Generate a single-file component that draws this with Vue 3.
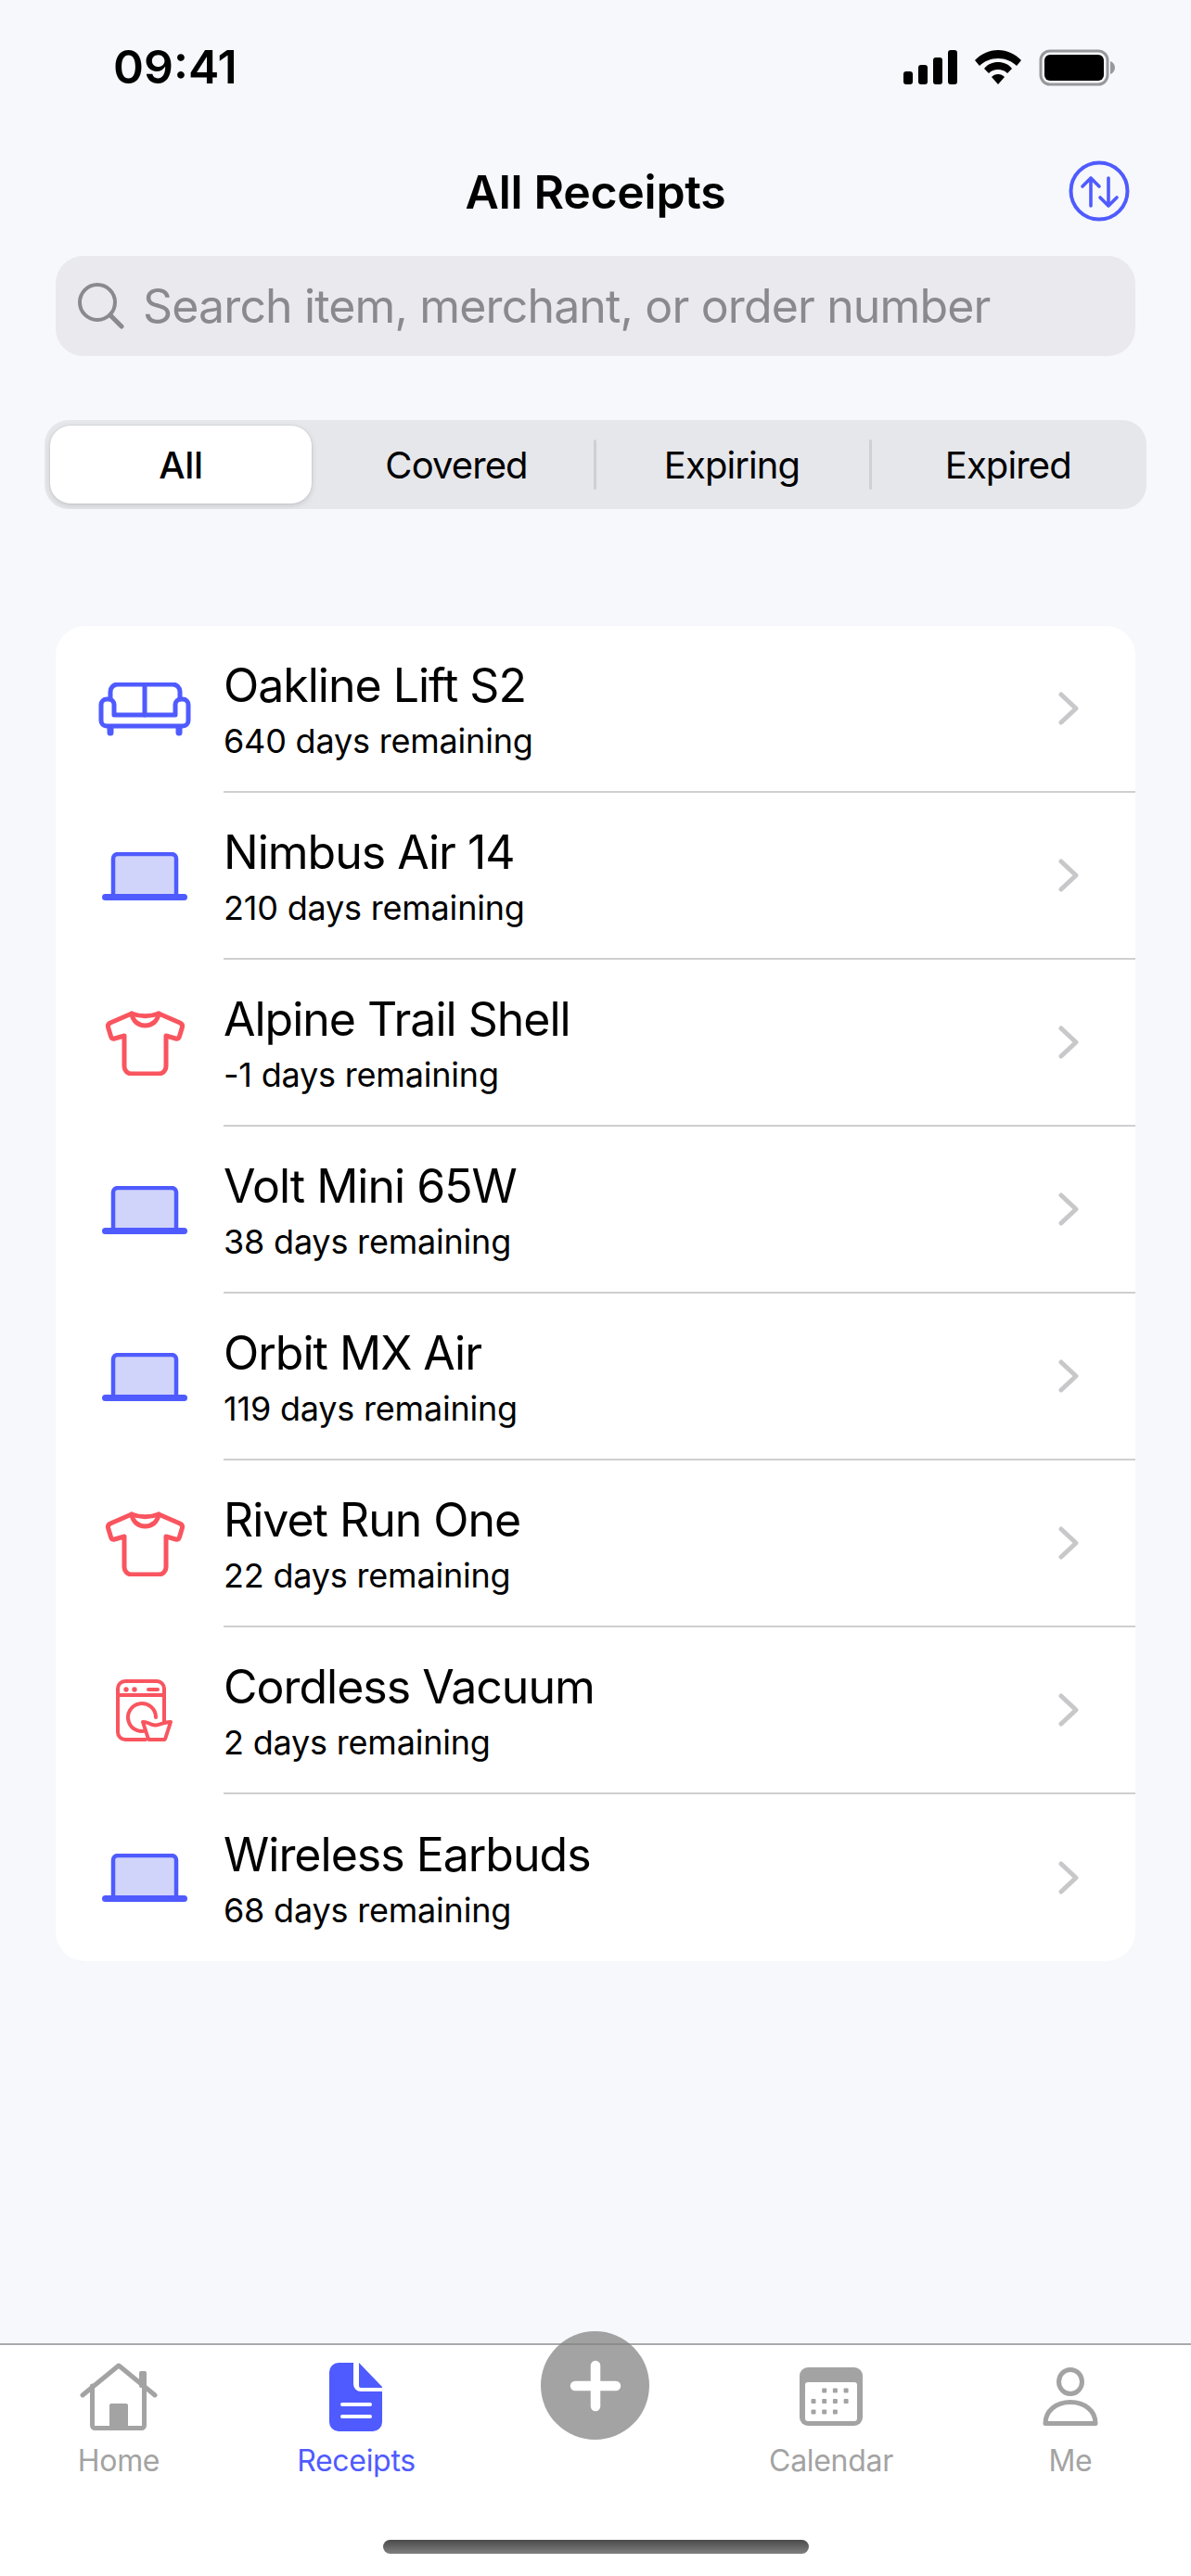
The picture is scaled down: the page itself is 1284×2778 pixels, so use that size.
<script setup>
const items = [
  { name: 'Oakline Lift S2', days: '640 days remaining', icon: 'sofa' },
  { name: 'Nimbus Air 14', days: '210 days remaining', icon: 'laptop' },
  { name: 'Alpine Trail Shell', days: '-1 days remaining', icon: 'shirt' },
  { name: 'Volt Mini 65W', days: '38 days remaining', icon: 'laptop' },
  { name: 'Orbit MX Air', days: '119 days remaining', icon: 'laptop' },
  { name: 'Rivet Run One', days: '22 days remaining', icon: 'shirt' },
  { name: 'Cordless Vacuum', days: '2 days remaining', icon: 'washer' },
  { name: 'Wireless Earbuds', days: '68 days remaining', icon: 'laptop' },
]
const tabs = ['All', 'Covered', 'Expiring', 'Expired']
const dots = [[1,0],[2,0],[3,0],[0,1],[1,1],[2,1],[3,1],[0,2],[1,2],[2,2]]
</script>

<template>
  <div class="screen">
    <div class="status">
      <span class="time">09:41</span>
      <div class="status-icons">
        <svg width="58" height="40" viewBox="0 0 58 40"><rect x="0" y="24" width="10" height="14" rx="3"/><rect x="16" y="17" width="10" height="21" rx="3"/><rect x="32" y="9" width="10" height="29" rx="3"/><rect x="48" y="1" width="10" height="37" rx="3"/></svg>
        <svg width="50" height="40" viewBox="0 0 50 40"><path d="M25 1C15 1 7 5 0 12l5 6c5-5 12-8 20-8s15 3 20 8l5-6C43 5 35 1 25 1z"/><path d="M25 14c-6 0-11 2-15 7l5 5c3-3 6-4 10-4s7 1 10 4l5-5c-4-5-9-7-15-7z"/><path d="M25 27c-3 0-5 1-7 3l7 8 7-8c-2-2-4-3-7-3z"/></svg>
        <svg width="82" height="40" viewBox="0 0 82 40"><rect x="2" y="2" width="72" height="36" rx="10" fill="none" stroke="#98989c" stroke-width="3"/><rect x="6" y="6" width="64" height="28" rx="6"/><path d="M77 13c3 1 5 4 5 7s-2 6-5 7z" fill="#98989c"/></svg>
      </div>
    </div>

    <header class="nav">
      <h1>All Receipts</h1>
      <svg class="sort" width="66" height="66" viewBox="0 0 66 66" fill="none" stroke="#4f5bff" stroke-linecap="round" stroke-linejoin="round"><circle cx="33" cy="33" r="30.500" stroke-width="4"/><path d="M24 49V19M15 28l9-9 9 9M43 19v30M34 40l9 9 9-9" stroke-width="3.600"/></svg>
    </header>

    <div class="search">
      <svg width="50" height="50" viewBox="0 0 50 50" fill="none" stroke="#8a8a8e" stroke-width="4" stroke-linecap="round"><circle cx="21" cy="21" r="19"/><path d="M35 35l12 12" stroke-width="5"/></svg>
      <span>Search item, merchant, or order number</span>
    </div>

    <div class="segments">
      <div v-for="(t, i) in tabs" :key="t" class="segment" :class="{ active: i === 0, sep: i > 1 }">{{ t }}</div>
    </div>

    <ul class="list">
      <li v-for="item in items" :key="item.name" class="row">
        <div class="row-icon">
          <svg v-if="item.icon === 'sofa'" width="100" height="58" viewBox="0 0 100 58" fill="none" stroke="#4f5bff" stroke-width="5" stroke-linejoin="round" stroke-linecap="round"><path d="M13 18v-8a8 8 0 0 1 8-8h59a8 8 0 0 1 8 8v8"/><path d="M50 3v32"/><path d="M17 35V24a6 6 0 0 0-6-6H9a6 6 0 0 0-6 6v17a6 6 0 0 0 6 6h82a6 6 0 0 0 6-6V24a6 6 0 0 0-6-6h-2a6 6 0 0 0-6 6v11z"/><path d="M13 50v4M87 50v4" stroke-width="7"/></svg>
          <svg v-else-if="item.icon === 'laptop'" width="92" height="52" viewBox="0 0 92 52" fill="none" stroke="#4f5bff" stroke-linejoin="round" stroke-linecap="round"><path d="M12 48V7a5 5 0 0 1 5-5h58a5 5 0 0 1 5 5v41z" fill="#d0d4fb" stroke-width="4.500"/><path d="M3.500 48.500h85" stroke-width="7"/></svg>
          <svg v-else-if="item.icon === 'shirt'" width="86" height="70" viewBox="0 0 86 70" fill="none" stroke="#f9555f" stroke-width="5" stroke-linejoin="round" stroke-linecap="round"><path d="M29 3c9 3.500 20 3.500 29 0l23 10c2 1 3 2.500 2.500 4.500l-3 10c-.5 2-2 3-4 2.500L66 27v33a8 8 0 0 1-8 8H29a8 8 0 0 1-8-8V27l-10.500 3c-2 .5-3.500-.5-4-2.500l-3-10c-.5-2 .5-3.500 2.500-4.500z"/><path d="M29 3c1 8 7 13 14.500 13S57 11 58 3"/></svg>
          <svg v-else width="64" height="70" viewBox="0 0 64 70" fill="none" stroke="#f9555f" stroke-width="4" stroke-linecap="round" stroke-linejoin="round"><path d="M33 66H11a8 8 0 0 1-8-8V11a8 8 0 0 1 8-8h34a8 8 0 0 1 8 8v36"/><path d="M3 18h50"/><path d="M36 12h10"/><circle cx="12" cy="12" r="2.700" fill="#f9555f" stroke="none"/><circle cx="21" cy="12" r="2.700" fill="#f9555f" stroke="none"/><path d="M36 55.300A15 15 0 1 1 44 42"/><path d="M30 47c5-1 8 4 14 3.500s10-4 16-3.500l-5.500 17a2.500 2.500 0 0 1-2.500 2H38a2.500 2.500 0 0 1-2.500-2z" fill="#fff"/></svg>
        </div>
        <div class="row-body">
          <div class="row-text">
            <div class="name">{{ item.name }}</div>
            <div class="days">{{ item.days }}</div>
          </div>
          <svg class="chev" width="22" height="36" viewBox="0 0 22 36" fill="none" stroke="#c8c8ca" stroke-width="5" stroke-linecap="round" stroke-linejoin="round"><path d="M3 3l16 15L3 33"/></svg>
        </div>
      </li>
    </ul>

    <nav class="tabbar">
      <div class="tab">
        <svg width="84" height="76" viewBox="0 0 84 76" fill="none" stroke="#a3a3a3" stroke-width="5" stroke-linecap="round" stroke-linejoin="round"><path d="M3 36L42 4l39 32"/><rect x="64" y="10" width="8" height="18" rx="2" fill="#a3a3a3" stroke="none"/><path d="M13.500 26v42.500a3 3 0 0 0 3 3h50a3 3 0 0 0 3-3V26"/><rect x="32" y="45" width="20" height="29" rx="2" fill="#a3a3a3" stroke="none"/></svg>
        <span>Home</span>
      </div>
      <div class="tab active">
        <svg width="60" height="76" viewBox="0 0 60 76"><path d="M11 1H27V24a8 8 0 0 0 8 8H58V65a10 10 0 0 1-10 10H11A10 10 0 0 1 1 65V11A10 10 0 0 1 11 1z" fill="#4f5bff"/><path d="M33 1L58 27v1H35a2 2 0 0 1-2-2z" fill="#4f5bff"/><path d="M15 46h30M15 59h30" stroke="#fff" stroke-width="4" stroke-linecap="round"/></svg>
        <span>Receipts</span>
      </div>
      <div class="tab spacer"></div>
      <div class="tab">
        <svg width="74" height="76" viewBox="0 0 74 76"><rect x="3" y="6" width="68" height="63" rx="9" fill="#a3a3a3"/><rect x="9" y="22" width="56" height="42" rx="3" fill="#fff"/><rect v-for="(d, i) in dots" :key="i" :x="15.500 + d[0] * 11.700" :y="28.500 + d[1] * 11.500" width="5" height="5" rx="1" fill="#a3a3a3"/></svg>
        <span>Calendar</span>
      </div>
      <div class="tab">
        <svg width="64" height="76" viewBox="0 0 64 76" fill="none" stroke="#a3a3a3" stroke-width="5" stroke-linejoin="round"><ellipse cx="32" cy="21.500" rx="12.500" ry="13"/><path d="M5 66.500c0-14 12-23 27-23s27 9 27 23z"/></svg>
        <span>Me</span>
      </div>
    </nav>

    <div class="fab">
      <svg width="56" height="56" viewBox="0 0 56 56" stroke="#fff" stroke-width="10.500" stroke-linecap="round"><path d="M28 6v44M6 28h44"/></svg>
    </div>
    <div class="home-bar"></div>
  </div>
</template>

<style scoped>
.screen { position: relative; width: 1284px; height: 2778px; background: #f7f8fc; font-family: Inter, "Liberation Sans", sans-serif; color: #000; overflow: hidden; }
.status { height: 144px; padding: 44px 82px 0 122px; box-sizing: border-box; display: flex; justify-content: space-between; align-items: flex-start; }
.time { font-size: 50px; line-height: 56px; font-weight: 600; }
.status-icons { display: flex; align-items: flex-start; gap: 19px; padding-top: 9px; }
.nav { position: relative; height: 120px; display: flex; align-items: center; justify-content: center; padding-top: 6px; box-sizing: border-box; }
.nav h1 { margin: 0; font-size: 50px; font-weight: 600; line-height: 60px; letter-spacing: -.3px; }
.sort { position: absolute; right: 66px; top: 29px; }
.search { margin: 12px 60px 0; height: 108px; border-radius: 30px; background: #e9e9ee; display: flex; align-items: center; padding-left: 24px; gap: 20px; color: #8a8a8e; font-size: 50px; letter-spacing: -.85px; }
.segments { margin: 69px 48px 0; height: 96px; border-radius: 26px; background: #e6e7eb; display: grid; grid-template-columns: 295.500px 297px 297px 1fr; overflow: hidden; }
.segment { display: flex; align-items: center; justify-content: center; font-size: 40px; letter-spacing: -.9px; position: relative; }
.segment.active { margin: 6px 7.500px 6px 6px; background: #fff; border-radius: 22px; box-shadow: 0 2px 6px rgba(0,0,0,.14), 0 0 0 1px rgba(0,0,0,.03); letter-spacing: -.3px; font-weight: 500; }
.segment.sep::before { content: ""; position: absolute; left: -1px; top: 21px; bottom: 21px; width: 3px; border-radius: 2px; background: #cfd0d4; }
.list { list-style: none; margin: 126px 60px 0; padding: 0; background: #fff; border-radius: 32px; }
.row { display: flex; height: 180px; }
.row-icon { width: 181px; flex: none; display: flex; align-items: center; justify-content: center; padding-left: 11px; box-sizing: border-box; }
.row-body { flex: 1; display: flex; align-items: center; justify-content: space-between; padding-right: 61px; border-bottom: 2px solid #cfcfd1; }
.row:last-child .row-body { border-bottom: none; }
.row-text { padding-top: 2px; }
.name { font-size: 50px; line-height: 60px; letter-spacing: -1px; }
.days { font-size: 36px; line-height: 44px; margin-top: 8px; letter-spacing: -.2px; }
.tabbar { position: absolute; left: 0; right: 0; top: 2527px; bottom: 0; background: #fff; border-top: 2px solid #a9a9ad; display: grid; grid-template-columns: 256px 256px 256px 256px 260px; padding-top: 18px; box-sizing: border-box; }
.tab { display: flex; flex-direction: column; align-items: center; color: #a3a3a3; font-size: 32px; letter-spacing: -.3px; gap: 11px; }
.tab.active { color: #4f5bff; }
.fab { position: absolute; left: 583px; top: 2514px; width: 117px; height: 117px; border-radius: 50%; background: rgba(128,128,128,.72); display: flex; align-items: center; justify-content: center; }
.home-bar { position: absolute; left: 413px; top: 2739px; width: 459px; height: 15px; border-radius: 8px; background: linear-gradient(#4a4a4a, #808080); }
</style>
